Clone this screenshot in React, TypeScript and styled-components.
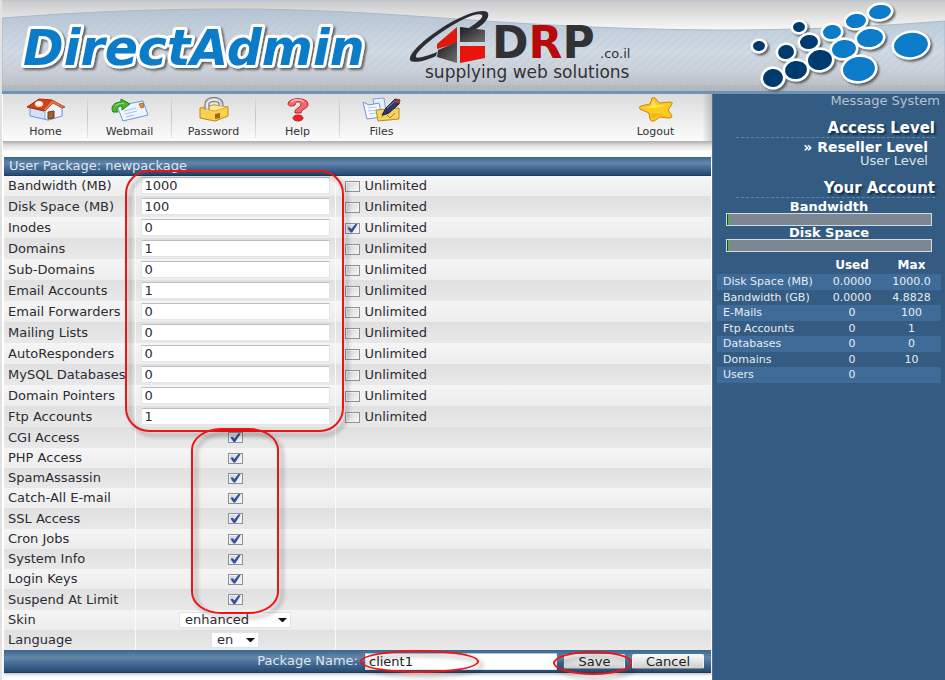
import React, { useState } from "react";
import styled, { createGlobalStyle } from "styled-components";

const Global = createGlobalStyle`
  * { box-sizing: border-box; }
  body {
    margin: 0;
    background: #fff;
    font: 13px/16px "DejaVu Sans", Verdana, sans-serif;
    color: #2b2b33;
  }
  input, select, button { font: inherit; color: inherit; margin: 0; }
`;

const Page = styled.div`
  min-height: 100vh;
  display: flex;
  flex-direction: column;
  border-left: 2px solid #e2e2e2;
`;

/* ---------- banner ---------- */

const Banner = styled.header`
  height: 94px;
  position: relative;
  overflow: hidden;
  display: flex;
  align-items: flex-start;
  background: #c3ccd6;
`;

const BannerArt = styled.svg`
  position: absolute;
  inset: 0;
  width: 100%;
  height: 100%;
`;

const BrandLogo = styled.svg`
  position: relative;
  flex: none;
  display: block;
`;

const DotsArt = styled(BrandLogo)`
  margin-left: auto;
`;

/* ---------- page body ---------- */

const Body = styled.div`
  flex: 1;
  display: flex;
`;

const Main = styled.main`
  flex: 1;
  min-width: 0;
  margin-left: 1px;
`;

const Toolbar = styled.nav`
  display: flex;
  height: 47px;
  padding-left: 1px;
  background:
    linear-gradient(to left, rgba(120, 120, 120, 0.35), transparent 10px),
    linear-gradient(#dcdcdc, #fcfcfc);
`;

const ToolLink = styled.a<{ $divided?: boolean; $end?: boolean }>`
  width: 84px;
  height: 44px;
  display: flex;
  flex-direction: column;
  align-items: center;
  justify-content: space-between;
  padding-top: 3px;
  font-size: 11px;
  line-height: 12px;
  color: #333;
  text-decoration: none;
  border-right: 1px solid transparent;
  border-image: ${(p) => (p.$divided ? "linear-gradient(#e0e0e0, #c4c4c4 50%, #e8e8e8) 1" : "none")};
  margin-left: ${(p) => (p.$end ? "auto" : "0")};
  margin-right: ${(p) => (p.$end ? "14px" : "0")};
  svg { display: block; }
`;

const ToolShadow = styled.div`
  height: 11px;
  margin-bottom: 5px;
  background: linear-gradient(#acacac, #dedede 40%, #fff);
`;

/* ---------- package form ---------- */

const Form = styled.form`
  position: relative;
  margin: 0 1px;
`;

const barFill = "linear-gradient(#3a678f, #6686a8 35%, #4a7099 55%, #254a72)";

const Grid = styled.table`
  width: 100%;
  border-collapse: collapse;
  table-layout: fixed;
  col:nth-child(1) { width: 131px; }
  col:nth-child(2) { width: 200px; }
`;

const TitleCell = styled.th`
  height: 18px;
  padding: 0 5px;
  text-align: left;
  font-weight: normal;
  line-height: 16px;
  color: #dfe6ee;
  background: ${barFill};
  border-bottom: 1px solid #1d3d60;
`;

const Row = styled.tr<{ $tall?: boolean; $dark?: boolean }>`
  height: ${(p) => (p.$tall ? 21 : 20)}px;
  background: ${(p) =>
    p.$dark ? "linear-gradient(#e0e0e0, #e9e9e9)" : "linear-gradient(#f5f5f5, #ededed)"};
`;

const LabelCell = styled.th`
  padding: 0 0 0 4px;
  text-align: left;
  font-weight: normal;
  line-height: 16px;
  white-space: nowrap;
`;

const ValueCell = styled.td`
  padding: 0 5px;
  line-height: 16px;
  border-left: 1px solid #fafafa;
`;

const OptionCell = styled(ValueCell)`
  padding: 1px 9px 0;
`;

const TextInput = styled.input`
  display: block;
  width: 100%;
  height: 17px;
  padding: 0 3px;
  line-height: 14px;
  background: #fff;
  border: 1px solid #e2e6ec;
  border-top-color: #b9bdc4;
  border-radius: 1px;
  outline: none;
`;

const Check = styled.input`
  appearance: none;
  flex: none;
  display: block;
  position: relative;
  width: 15px;
  height: 11px;
  border: 1px solid #8d9297;
  background: linear-gradient(135deg, #cdd1d5, #f8f8f8);
  box-shadow: inset 0 0 0 1px #f1f1f1;
  &:checked::after {
    content: "";
    position: absolute;
    inset: 0 1px;
    background: #34509c;
    clip-path: polygon(8% 48%, 30% 42%, 44% 62%, 84% 0, 100% 8%, 52% 100%, 36% 100%);
  }
`;

const CenteredCheck = styled(Check)`
  margin: 0 auto;
`;

const Unlimited = styled.label`
  display: flex;
  align-items: center;
  gap: 5px;
`;

const SelectBox = styled.span<{ $w: number }>`
  position: relative;
  display: block;
  margin: 0 auto;
  width: ${(p) => p.$w}px;
  height: 16px;
  select {
    appearance: none;
    display: block;
    width: 100%;
    height: 16px;
    padding: 0 5px;
    line-height: 14px;
    background: #fff;
    border: 1px solid #dfe3ea;
    border-radius: 1px;
  }
  svg { position: absolute; right: 4px; top: 6px; pointer-events: none; }
`;

const Footer = styled.div`
  display: flex;
  align-items: center;
  justify-content: flex-end;
  gap: 7px;
  height: 23px;
  padding-right: 7px;
  color: #dfe6ee;
  background: ${barFill};
  border-bottom: 1px solid #1d3d60;
  box-shadow: 0 2px 2px rgba(0, 0, 0, 0.2);
`;

const Marked = styled.span<{ $w: number }>`
  position: relative;
  flex: none;
  width: ${(p) => p.$w}px;
  color: #222;
`;

const Button = styled.button`
  display: block;
  width: 100%;
  height: 15px;
  padding: 0;
  line-height: 13px;
  background: linear-gradient(#f8f8f8, #e4e4e4 50%, #cfcfcf);
  border: 1px solid #f3f3f3;
  border-bottom-color: #8a8a8a;
  border-radius: 2px;
`;

/* Red pen marks drawn over the form */
const Mark = styled.span<{ $x: number; $y: number; $w: number; $h: number; $r: string }>`
  position: absolute;
  left: ${(p) => p.$x}px;
  top: ${(p) => p.$y}px;
  width: ${(p) => p.$w}px;
  height: ${(p) => p.$h}px;
  border: 2px solid #ee1414;
  border-radius: ${(p) => p.$r};
  filter: drop-shadow(4px 4px 2px rgba(0, 0, 0, 0.35));
  pointer-events: none;
`;

/* ---------- sidebar ---------- */

const Side = styled.aside`
  flex: none;
  width: 233px;
  padding: 0 4px;
  color: #fff;
  background: #345b81;
  border-left: 1px solid #4d7196;
`;

const MessageLink = styled.a`
  display: block;
  padding: 0 1px 12px;
  text-align: right;
  line-height: 14px;
  color: #b6c2cf;
  text-decoration: none;
`;

const SideTitle = styled.h2`
  margin: 0 6px 2px 19px;
  padding-bottom: 1px;
  font-size: 15px;
  line-height: 16px;
  text-align: right;
  text-shadow: 2px 2px 2px #12304f;
  border-bottom: 1px dashed #6484a4;
`;

const Levels = styled.div`
  display: flex;
  flex-direction: column;
  align-items: flex-end;
  padding: 0 13px 12px 0;
`;

const LevelLink = styled.a<{ $on?: boolean }>`
  font-size: ${(p) => (p.$on ? 14 : 13)}px;
  line-height: 14px;
  color: ${(p) => (p.$on ? "#fff" : "#dbe3eb")};
  font-weight: ${(p) => (p.$on ? "bold" : "normal")};
  text-decoration: none;
`;

const Meter = styled.div`
  padding: 0 9px;
  text-align: center;
  font-size: 13px;
  font-weight: bold;
  line-height: 13px;
`;

const Track = styled.div`
  height: 13px;
  border: 1px solid #d5dae0;
  background: linear-gradient(to right, #26452c 1px, #57a957 1px, #57a957 3px, #7c8791 3px);
`;

const Usage = styled.table`
  width: 100%;
  margin-top: 5px;
  border-collapse: collapse;
  font-size: 11px;
  line-height: 14px;
  col:nth-child(1) { width: 105px; }
  col:nth-child(2) { width: 60px; }
  th, td { padding: 0; text-align: center; font-weight: normal; color: #e6edf4; }
  thead th { height: 17px; padding-bottom: 2px; font-size: 12px; font-weight: bold; color: #fff; }
  tbody th { padding-left: 6px; text-align: left; white-space: nowrap; }
  tbody tr { height: 15px; }
  tbody tr:nth-child(odd) { height: 16px; background: #3e6b97; }
`;

const dots: [number, number, number, number, string][] = [
  [19, 46, 6, 5, "#003a70"],
  [59, 27, 6, 5, "#003a70"],
  [46, 52, 8, 7, "#003a70"],
  [69, 42, 9, 7, "#003a70"],
  [33, 78, 10, 9, "#003a70"],
  [56, 70, 11, 9, "#003a70"],
  [80, 60, 12, 10, "#003a70"],
  [92, 32, 9, 7, "#0a7cc8"],
  [116, 21, 10, 7, "#0a7cc8"],
  [140, 12, 11, 7, "#0a7cc8"],
  [104, 49, 12, 9, "#0a7cc8"],
  [130, 38, 13, 9, "#0a7cc8"],
  [119, 69, 16, 12, "#0a7cc8"],
  [171, 45, 17, 12, "#0a7cc8"],
];

function BannerBackdrop() {
  return (
    <BannerArt viewBox="0 0 943 94" preserveAspectRatio="none" aria-hidden="true">
      <defs>
        <linearGradient id="top" x1="0" y1="0" x2="0" y2="1">
          <stop offset="0" stopColor="#c9c9c9" />
          <stop offset="0.35" stopColor="#fdfdfd" />
        </linearGradient>
        <linearGradient id="wave" gradientUnits="userSpaceOnUse" x1="0" y1="9" x2="0" y2="94">
          <stop offset="0" stopColor="#b4c4d4" />
          <stop offset="0.5" stopColor="#d0dae4" />
          <stop offset="0.72" stopColor="#cbd1d9" />
          <stop offset="1" stopColor="#b3b7be" />
        </linearGradient>
        <pattern id="hatch" width="9" height="8" patternUnits="userSpaceOnUse">
          <path d="M-2 10L11 -2M-2 2L2 -2M7 10L11 6" stroke="#a9b8c8" strokeOpacity="0.3" strokeWidth="1" />
        </pattern>
        <pattern id="mesh" width="3" height="2" patternUnits="userSpaceOnUse">
          <path d="M1 0V2" stroke="#9a9fa6" strokeOpacity="0.6" />
        </pattern>
      </defs>
      <rect width="943" height="94" fill="url(#top)" />
      <path d="M0 18C80 12 150 9 230 9C400 9 500 29 720 30C820 30 890 25 943 21V94H0Z" fill="url(#wave)" stroke="#a9b9c9" strokeWidth="1" />
      <path d="M0 18C80 12 150 9 230 9C400 9 500 29 720 30C820 30 890 25 943 21V76H0Z" fill="url(#hatch)" />
      <rect y="85" width="943" height="6" fill="url(#mesh)" />
      <rect y="91" width="943" height="3" fill="#6f93b7" />
      <rect width="943" height="1" fill="#b8c6d6" />
    </BannerArt>
  );
}

function DirectAdminLogo() {
  return (
    <BrandLogo width="400" height="94" role="img" aria-label="DirectAdmin">
      <defs>
        <filter id="soft" x="-10%" y="-20%" width="120%" height="150%">
          <feDropShadow dx="2" dy="2" stdDeviation="1" floodColor="#444" floodOpacity="0.8" />
        </filter>
      </defs>
      <text
        x="21"
        y="65"
        fontSize="49"
        fontWeight="bold"
        fontStyle="italic"
        fontFamily="DejaVu Sans, Verdana, sans-serif"
        fill="#0a7cc8"
        stroke="#fff"
        strokeWidth="6"
        strokeLinejoin="round"
        paintOrder="stroke"
        filter="url(#soft)"
      >
        DirectAdmin
      </text>
    </BrandLogo>
  );
}

function DrpLogo() {
  return (
    <BrandLogo width="240" height="94" role="img" aria-label="DRP.co.il supplying web solutions">
      <defs>
        <linearGradient id="ink" x1="0" y1="0" x2="1" y2="1">
          <stop offset="0" stopColor="#1c1c1e" />
          <stop offset="1" stopColor="#707073" />
        </linearGradient>
      </defs>
      <path
        fillRule="evenodd"
        d="M8 60C6 53 26 36 46 24C66 12 84 8 86 13C88 18 81 26 70 31L67 28C76 22 82 17 80 15C76 12 60 19 46 28C27 40 13 53 14 57C15 59 25 56 35 52L34 56C24 61 10 64 8 60Z"
        fill="#2d2d30"
      />
      <path d="M55 27V43L35 49V44Z" fill="#e3170d" />
      <path d="M58 27L83 30V42H58Z" fill="url(#ink)" />
      <path d="M36 50L55 42V63L35 57Z" fill="url(#ink)" />
      <path d="M58 46H83V58L58 63Z" fill="#e8150c" />
      <g fontFamily="DejaVu Sans, Verdana, sans-serif" fill="#323235">
        <text x="90" y="58" fontSize="44" fontWeight="bold">
          D<tspan fill="#b8090b">R</tspan>P
        </text>
        <text x="198" y="58" fontSize="13">.co.il</text>
        <text x="23" y="78" fontSize="17">supplying web solutions</text>
      </g>
    </BrandLogo>
  );
}

function DotCluster() {
  return (
    <DotsArt width="205" height="94" aria-hidden="true">
      <g stroke="#fff" strokeWidth="5" paintOrder="stroke" filter="url(#soft)">
        {dots.map(([x, y, rx, ry, fill]) => (
          <ellipse key={`${x}-${y}`} cx={x} cy={y} rx={rx} ry={ry} fill={fill} transform={`rotate(-8 ${x} ${y})`} />
        ))}
      </g>
    </DotsArt>
  );
}

const HomeIcon = () => (
  <svg width="40" height="25" viewBox="0 0 40 25">
    <path d="M4 11V19L22 23L36 19V10L28 4Z" fill="#cfe2fa" stroke="#7396cf" />
    <path d="M19 13L27 5L36 11V19L22 23L19 22Z" fill="#eaf3ff" stroke="#7396cf" strokeWidth="0.8" />
    <path d="M1 10L13 2L26 3L18 14Z" fill="#d2451a" stroke="#9f2c08" />
    <path d="M26 3L39 10L36 11L27 6L19 14L17 13Z" fill="#ef7d3c" stroke="#a43b10" strokeWidth="0.8" />
    <ellipse cx="13" cy="7" rx="4" ry="3" fill="#fff" opacity="0.9" />
    <path d="M22 15L28 14V21L22 22Z" fill="#a3622b" stroke="#6d3c16" />
  </svg>
);

const MailIcon = () => (
  <svg width="40" height="25" viewBox="0 0 40 25">
    <path d="M7 9L33 4L38 18L13 24Z" fill="#eef4ff" stroke="#7698d6" />
    <path d="M14 14L26 11M15 17L27 14M16 20L24 18" stroke="#a9c1ea" />
    <path d="M29 7L33 6L34 10L31 11Z" fill="#e9912c" stroke="#9a5b20" strokeWidth="0.8" />
    <path d="M3 15C0 10 4 5 11 5V2L20 7L12 13V9C7 9 6 12 8 15Z" fill="#4cb82f" stroke="#227f17" />
    <path d="M5 9C8 6 11 7 14 6" stroke="#aee98f" fill="none" />
  </svg>
);

const LockIcon = () => (
  <svg width="32" height="25" viewBox="0 0 32 25">
    <path d="M2 11L16 8L30 10V19L17 24L2 21Z" fill="#fbd04f" stroke="#bd8416" />
    <path d="M2 11L17 14L30 10L16 8Z" fill="#ffe892" stroke="#d49e2b" strokeWidth="0.8" />
    <path d="M9 13V7C9 1 23 1 23 7V9" fill="none" stroke="#777" strokeWidth="5" />
    <path d="M9 13V7C9 1 23 1 23 7V9" fill="none" stroke="#cfcfcf" strokeWidth="3" />
    <path d="M9 11V7C10 3 17 2 20 4" fill="none" stroke="#fff" />
    <path d="M17 17L22 16V21L17 22Z" fill="#a1661b" />
  </svg>
);

const HelpIcon = () => (
  <svg width="24" height="25" viewBox="0 0 24 25">
    <path d="M2 7C2 0 22 0 22 7C22 12 15 12 15 16H9C8 11 15 11 15 7C15 4 9 4 9 8C6 10 2 9 2 7Z" fill="#f3696b" stroke="#bb2025" />
    <path d="M5 5C8 2 15 2 18 5" stroke="#ffbcbc" strokeWidth="1.5" fill="none" />
    <ellipse cx="12" cy="21" rx="5" ry="3" fill="#f21f25" stroke="#bb2025" />
  </svg>
);

const FilesIcon = () => (
  <svg width="40" height="25" viewBox="0 0 40 25">
    <path d="M11 2L22 1L24 15L13 17Z" fill="#e4eefc" stroke="#87a2d2" />
    <path d="M1 5L7 8L17 6L20 20L5 22Z" fill="#f5f9ff" stroke="#7594cc" />
    <path d="M6 11L15 10M6 14L15 13M7 17L16 16" stroke="#b4c8e8" />
    <path d="M14 13L37 11L37 22L16 24Z" fill="#f7d161" stroke="#b78b2b" />
    <path d="M19 20L24 17L28 21L33 16" stroke="#a0862e" fill="none" />
    <path d="M20 18L24 11L33 2L38 3L37 7L27 16Z" fill="#2c3965" stroke="#182143" />
    <path d="M32 3L38 2L38 6L34 6Z" fill="#a7392c" />
    <path d="M25 11L33 4" stroke="#8793bd" />
  </svg>
);

const StarIcon = () => (
  <svg width="36" height="25" viewBox="0 0 36 25">
    <path d="M14 1Q17 0 18 2L21 6L32 5Q35 5 34 7L30 13L34 19Q34 21 31 21L22 20L16 24Q13 25 12 22L11 16L2 12Q0 10 3 9L12 7Z" fill="#fdcc1c" stroke="#c88215" />
    <path d="M15 3L18 8L28 8L22 10L16 11L7 11L14 9Z" fill="#ffe254" />
    <path d="M13 16L14 22L21 18L31 19L22 17Z" fill="#f8b414" />
  </svg>
);

const tools = [
  { name: "Home", Icon: HomeIcon },
  { name: "Webmail", Icon: MailIcon },
  { name: "Password", Icon: LockIcon },
  { name: "Help", Icon: HelpIcon },
  { name: "Files", Icon: FilesIcon },
];

const limits: [string, string][] = [
  ["Bandwidth (MB)", "1000"],
  ["Disk Space (MB)", "100"],
  ["Inodes", "0"],
  ["Domains", "1"],
  ["Sub-Domains", "0"],
  ["Email Accounts", "1"],
  ["Email Forwarders", "0"],
  ["Mailing Lists", "0"],
  ["AutoResponders", "0"],
  ["MySQL Databases", "0"],
  ["Domain Pointers", "0"],
  ["Ftp Accounts", "1"],
];

const features = [
  "CGI Access",
  "PHP Access",
  "SpamAssassin",
  "Catch-All E-mail",
  "SSL Access",
  "Cron Jobs",
  "System Info",
  "Login Keys",
  "Suspend At Limit",
];

const usage = [
  ["Disk Space (MB)", "0.0000", "1000.0"],
  ["Bandwidth (GB)", "0.0000", "4.8828"],
  ["E-Mails", "0", "100"],
  ["Ftp Accounts", "0", "1"],
  ["Databases", "0", "0"],
  ["Domains", "0", "10"],
  ["Users", "0", ""],
];

function Picker({ id, width, value }: { id: string; width: number; value: string }) {
  return (
    <SelectBox $w={width}>
      <select id={id} defaultValue={value}>
        <option>{value}</option>
      </select>
      <svg width="9" height="5" viewBox="0 0 9 5" aria-hidden="true">
        <path d="M0 0H9L5 4H4Z" fill="#111" />
      </svg>
    </SelectBox>
  );
}

function PackageForm() {
  const [name, setName] = useState("client1");
  return (
    <Form onSubmit={(e) => e.preventDefault()}>
      <Grid>
        <colgroup>
          <col />
          <col />
          <col />
        </colgroup>
        <thead>
          <tr>
            <TitleCell colSpan={3}>User Package: newpackage</TitleCell>
          </tr>
        </thead>
        <tbody>
          {limits.map(([label, value], i) => (
            <Row key={label} $tall $dark={i % 2 === 1}>
              <LabelCell scope="row">
                <label htmlFor={`limit-${i}`}>{label}</label>
              </LabelCell>
              <ValueCell>
                <TextInput id={`limit-${i}`} defaultValue={value} />
              </ValueCell>
              <OptionCell>
                <Unlimited>
                  <Check type="checkbox" defaultChecked={label === "Inodes"} />
                  Unlimited
                </Unlimited>
              </OptionCell>
            </Row>
          ))}
        </tbody>
        <tbody>
          {features.map((label, i) => (
            <Row key={label} $tall={i % 4 === 0} $dark={i % 2 === 0}>
              <LabelCell scope="row">
                <label htmlFor={`feature-${i}`}>{label}</label>
              </LabelCell>
              <ValueCell>
                <CenteredCheck type="checkbox" id={`feature-${i}`} defaultChecked />
              </ValueCell>
              <ValueCell />
            </Row>
          ))}
        </tbody>
        <tbody>
          <Row>
            <LabelCell scope="row">
              <label htmlFor="skin">Skin</label>
            </LabelCell>
            <ValueCell>
              <Picker id="skin" width={112} value="enhanced" />
            </ValueCell>
            <ValueCell />
          </Row>
          <Row $dark>
            <LabelCell scope="row">
              <label htmlFor="language">Language</label>
            </LabelCell>
            <ValueCell>
              <Picker id="language" width={48} value="en" />
            </ValueCell>
            <ValueCell />
          </Row>
        </tbody>
      </Grid>
      <Footer>
        <label htmlFor="package-name">Package Name:</label>
        <Marked $w={192}>
          <TextInput id="package-name" value={name} onChange={(e) => setName(e.target.value)} />
          <Mark $x={-5} $y={-3} $w={119} $h={23} $r="50%" aria-hidden="true" />
        </Marked>
        <Marked $w={61}>
          <Button type="submit">Save</Button>
          <Mark $x={-11} $y={-3} $w={80} $h={24} $r="50%" aria-hidden="true" />
        </Marked>
        <Marked $w={72}>
          <Button type="button">Cancel</Button>
        </Marked>
      </Footer>
      <Mark $x={121} $y={13} $w={219} $h={262} $r="24px" aria-hidden="true" />
      <Mark $x={187} $y={271} $w={88} $h={186} $r="30px / 22px" aria-hidden="true" />
    </Form>
  );
}

function Sidebar() {
  return (
    <Side>
      <MessageLink href="#messages">Message System</MessageLink>
      <SideTitle>Access Level</SideTitle>
      <Levels>
        <LevelLink href="#reseller" $on>
          » Reseller Level
        </LevelLink>
        <LevelLink href="#user">User Level</LevelLink>
      </Levels>
      <SideTitle>Your Account</SideTitle>
      <Meter>
        Bandwidth
        <Track />
        Disk Space
        <Track />
      </Meter>
      <Usage>
        <colgroup>
          <col />
          <col />
          <col />
        </colgroup>
        <thead>
          <tr>
            <td />
            <th scope="col">Used</th>
            <th scope="col">Max</th>
          </tr>
        </thead>
        <tbody>
          {usage.map(([label, used, max]) => (
            <tr key={label}>
              <th scope="row">{label}</th>
              <td>{used}</td>
              <td>{max}</td>
            </tr>
          ))}
        </tbody>
      </Usage>
    </Side>
  );
}

export default function App() {
  return (
    <>
      <Global />
      <Page>
        <Banner>
          <BannerBackdrop />
          <DirectAdminLogo />
          <DrpLogo />
          <DotCluster />
        </Banner>
        <Body>
          <Main>
            <Toolbar>
              {tools.map(({ name, Icon }, i) => (
                <ToolLink key={name} href={`#${name.toLowerCase()}`} $divided={i < 4}>
                  <Icon />
                  {name}
                </ToolLink>
              ))}
              <ToolLink href="#logout" $end>
                <StarIcon />
                Logout
              </ToolLink>
            </Toolbar>
            <ToolShadow />
            <PackageForm />
          </Main>
          <Sidebar />
        </Body>
      </Page>
    </>
  );
}
